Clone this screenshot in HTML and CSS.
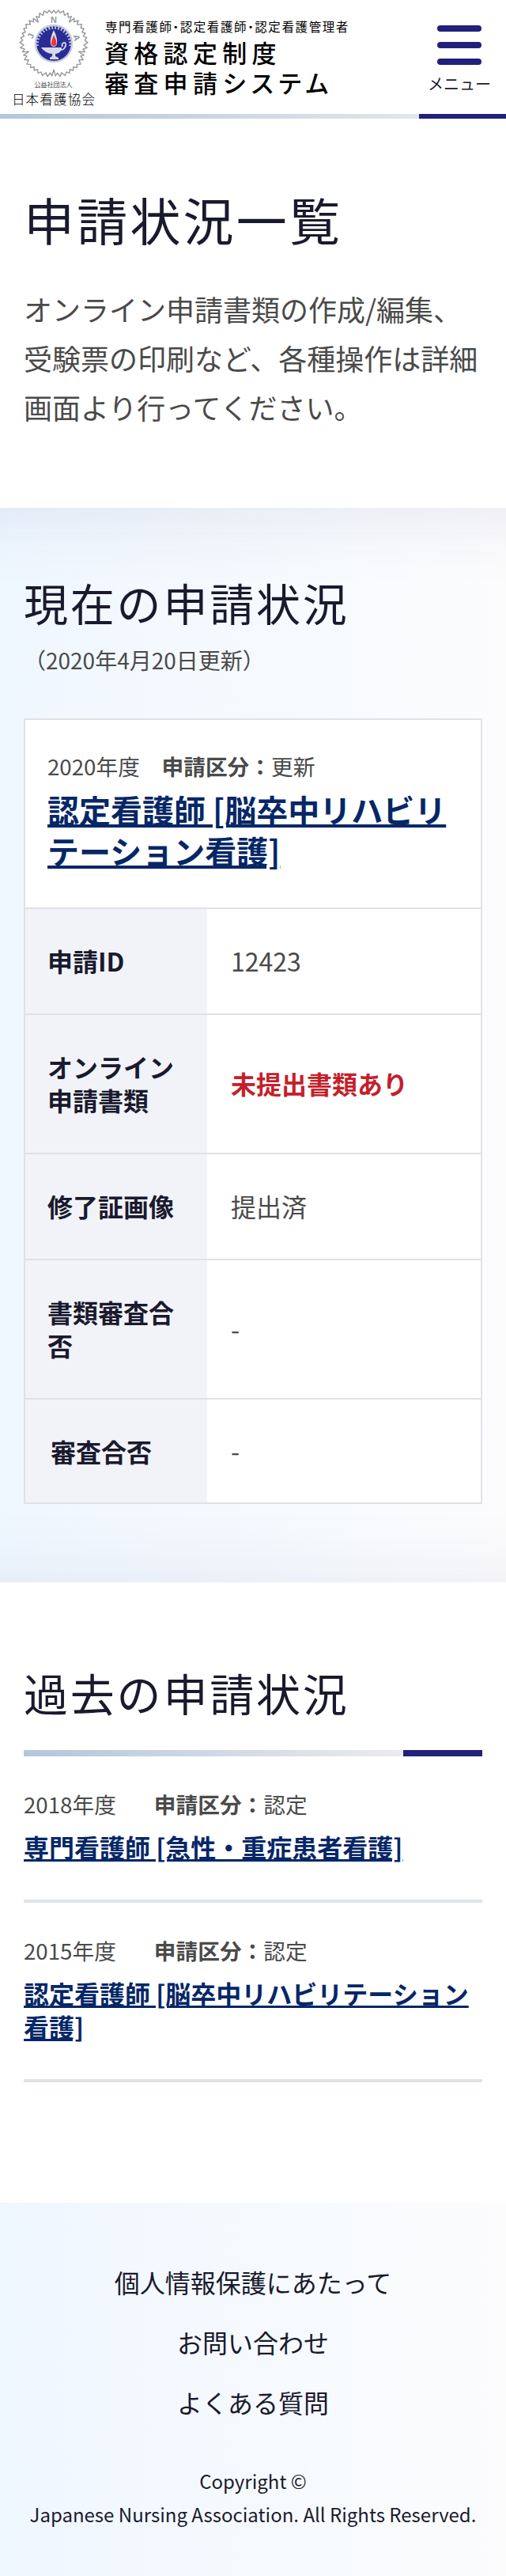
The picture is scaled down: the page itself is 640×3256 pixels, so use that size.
FILE: index.html
```html
<!DOCTYPE html>
<html lang="ja">
<head>
    <meta charset="UTF-8">
    <meta name="viewport" content="width=device-width, initial-scale=1.0">
    <title>申請状況一覧 | 資格認定制度 審査申請システム</title>
    <link rel="stylesheet" href="styles.css">
</head>
<body>
<header class="header">
    <a class="logo" href="#">
        <div class="logo-mark">
            <svg class="emblem" width="88" height="86" viewBox="-44 -43 88 86">
                <defs>
                    <path id="petal" d="M-19.4-26.7L-22.3-34.4L-18.2-32.8L-18-38.5L-13.6-35.5L-12.2-41.2L-8.2-38.6L-5.8-42L-2.7-38.4L0-42L2.7-38.4L5.8-42L8.2-38.6L12.2-41.2L13.6-35.5L18-38.5L18.2-32.8L22.3-34.4L19.4-26.7"/>
                </defs>
                <g fill="none" stroke="#96989b" stroke-width="1.4" stroke-linejoin="round">
                    <use href="#petal"/>
                    <use href="#petal" transform="rotate(72)"/>
                    <use href="#petal" transform="rotate(144)"/>
                    <use href="#petal" transform="rotate(216)"/>
                    <use href="#petal" transform="rotate(288)"/>
                </g>
                <g class="emblem-text">
                    <text x="0" y="-26">N</text>
                    <text x="0" y="-27" transform="rotate(-72)">J</text>
                    <text x="0" y="-26" transform="rotate(76)">A</text>
                </g>
                <circle cx="0" cy="0" r="23" fill="#2a2c96" stroke="#c6cbdc" stroke-width="2.4"/>
                <path d="M-20.9 3A21 21 0 1 1 20.9 3" fill="none" stroke="#c6cbdc" stroke-width="3.6" stroke-dasharray="1.8 2.2"/>
                <path d="M0-17C-5-7-6 4 0 4S5-7 0-17Z" fill="#dfe2ee"/>
                <path d="M0-11C-3-3-5 3 0 3S4-3 0-11Z" fill="#ee3533"/>
                <path d="M-16 5H10C10 11 5 13 2 13V16L6 18V20H-5V18L-2 16V13C-8 13-13 9-16 5Z" fill="#d5d9e8"/>
                <path d="M8 8C13 9 16 3 15 0S9 0 11 4" fill="none" stroke="#d5d9e8" stroke-width="1.8"/>
            </svg>
            <span class="logo-type">公益社団法人</span>
            <span class="logo-org">日本看護協会</span>
        </div>
        <div class="logo-title">
            <span class="logo-lead">専門看護師<i>・</i>認定看護師<i>・</i>認定看護管理者</span>
            <span class="logo-name">資格認定制度</span>
            <span class="logo-name">審査申請<span class="kana">システム</span></span>
        </div>
    </a>
    <a class="menu" href="#">
        <span class="menu-bar"></span>
        <span class="menu-bar"></span>
        <span class="menu-bar"></span>
        <span class="menu-label">メニュー</span>
    </a>
</header>

<main>
    <section class="intro">
        <h1>申請状況一覧</h1>
        <p>オンライン申請書類の作成/編集、受験票の印刷など、各種操作は詳細画面より行ってください。</p>
    </section>

    <section class="current">
        <h2>現在の申請状況</h2>
        <p class="updated">（2020年4月20日更新）</p>
        <div class="card">
            <div class="card-head">
                <p class="meta">2020年度　<strong>申請区分：</strong>更新</p>
                <a class="card-title" href="#">認定看護師 [脳卒中リハビリテーション看護]</a>
            </div>
            <dl class="row">
                <dt>申請ID</dt>
                <dd>12423</dd>
            </dl>
            <dl class="row">
                <dt>オンライン申請書類</dt>
                <dd class="alert">未提出書類あり</dd>
            </dl>
            <dl class="row">
                <dt>修了証画像</dt>
                <dd>提出済</dd>
            </dl>
            <dl class="row">
                <dt>書類審査合否</dt>
                <dd>-</dd>
            </dl>
            <dl class="row last">
                <dt>審査合否</dt>
                <dd>-</dd>
            </dl>
        </div>
    </section>

    <section class="past">
        <h2>過去の申請状況</h2>
        <ul class="past-list">
            <li>
                <p class="meta"><span class="year">2018年度</span><strong>申請区分：</strong>認定</p>
                <a href="#">専門看護師 [急性・重症患者看護]</a>
            </li>
            <li>
                <p class="meta"><span class="year">2015年度</span><strong>申請区分：</strong>認定</p>
                <a href="#">認定看護師 [脳卒中リハビリテーション看護]</a>
            </li>
        </ul>
    </section>
</main>

<footer class="footer">
    <ul class="footer-nav">
        <li><a href="#">個人情報保護にあたって</a></li>
        <li><a href="#">お問い合わせ</a></li>
        <li><a href="#">よくある質問</a></li>
    </ul>
    <p class="copyright">Copyright ©<br>Japanese Nursing Association. All Rights Reserved.</p>
</footer>
</body>
</html>
```
FILE: styles.css
```css
* {
    box-sizing: border-box;
    margin: 0;
    padding: 0;
}

body {
    font-family: "Noto Sans CJK JP", sans-serif;
    color: #4a4a4a;
    background-color: #fff;
}

ul {
    list-style: none;
}

a {
    color: inherit;
    text-decoration: none;
}

/* header */
.header {
    display: flex;
    justify-content: space-between;
    height: 150px;
    background: linear-gradient(90deg, #b3c6db, #e3e6ea 530px, #21217b 530px) bottom / 100% 6px no-repeat;
}

.logo {
    display: flex;
    color: #000;
}

.logo-mark {
    width: 120px;
    padding: 12px 0 0 15px;
    display: flex;
    flex-direction: column;
    align-items: center;
    white-space: nowrap;
}

.emblem {
    display: block;
    flex: none;
    margin-bottom: 3px;
}

.emblem-text {
    font-family: "Liberation Sans", sans-serif;
    font-size: 11px;
    font-weight: bold;
    text-anchor: middle;
    fill: #96989b;
}

.logo-type {
    font-size: 8px;
    line-height: 12px;
    color: #444;
}

.logo-org {
    font-size: 16.5px;
    font-weight: 300;
    line-height: 24px;
    letter-spacing: 1.2px;
    margin-right: -1px;
}

.logo-title {
    padding: 22px 0 0 12px;
    display: flex;
    flex-direction: column;
    font-weight: 500;
    white-space: nowrap;
}

.logo-lead {
    font-size: 15.5px;
    font-weight: 400;
    line-height: 23px;
    letter-spacing: 1.6px;
    margin: 0 0 2px 1px;
}

.logo-lead i {
    font-style: normal;
    margin: 0 -4px;
}

.logo-name {
    font-size: 31px;
    line-height: 38px;
    letter-spacing: 6.3px;
}

.kana {
    letter-spacing: 4px;
}

.menu {
    width: 118px;
    padding-top: 32px;
    display: flex;
    flex-direction: column;
    align-items: center;
    gap: 13px;
}

.menu-bar {
    width: 56px;
    height: 8px;
    border-radius: 4px;
    background-color: #21217b;
}

.menu-label {
    font-size: 20px;
    line-height: 28px;
    margin-top: -3px;
    color: #1a1a2e;
}

/* headings */
h1,
h2 {
    color: #1a1a2e;
    font-weight: 400;
    letter-spacing: 0.05em;
}

h1 {
    font-size: 64px;
    line-height: 84px;
}

h2 {
    font-size: 56px;
    line-height: 74px;
}

.meta {
    font-size: 27.7px;
    line-height: 42px;
}

/* intro */
.intro {
    height: 492px;
    padding: 84px 30px 0;
}

.intro p {
    margin-top: 41px;
    font-size: 36px;
    line-height: 62.2px;
}

/* current application */
.current {
    height: 1358px;
    padding: 82px 30px 0;
    background: linear-gradient(90deg, #eff7ff, #fcfcfd);
    box-shadow: inset 0 100px 90px -90px rgba(60, 60, 120, 0.1), inset 0 -100px 90px -90px rgba(60, 60, 120, 0.08);
}

.updated {
    font-size: 28px;
    line-height: 42px;
    margin: 15px 0 53px;
}

.card {
    border: 2px solid #dfe2e5;
    background-color: #fff;
}

.card-head {
    padding: 37px 28px 46px;
}

.card-title {
    display: block;
    margin-top: 8px;
    font-size: 40px;
    line-height: 52px;
}

.card-title,
.past-list a {
    color: #062767;
    font-weight: bold;
    text-decoration: underline;
}

.row {
    display: flex;
    border-top: 2px solid #dfe2e5;
    font-size: 32px;
    line-height: 42px;
}

.row dt {
    width: 230px;
    padding: 44px 28px 46px;
    background-color: #f2f3f8;
    color: #1a1a2e;
    font-weight: bold;
}

.row dd {
    flex: 1;
    display: flex;
    align-items: center;
    padding: 0 30px 2px;
}

.row .alert {
    color: #c4202a;
    font-weight: bold;
}

.row.last dt {
    padding-bottom: 44px;
    padding-left: 32px;
}

/* past applications */
.past {
    height: 784px;
    padding: 102px 30px 0;
}

.past h2 {
    padding-bottom: 44px;
    background: linear-gradient(90deg, #b3c6db, #ebebee 480px, #21217b 480px) bottom / 100% 8px no-repeat;
}

.past-list li {
    padding: 39px 0 46px;
    border-bottom: 4px solid #dfe3e5;
}

.past-list a {
    display: block;
    margin-top: 12px;
    font-size: 32px;
    line-height: 42px;
}

.year {
    margin-right: 48px;
}

/* footer */
.footer {
    height: 472px;
    padding-top: 62px;
    background: linear-gradient(90deg, #eff7ff, #fcfcfd);
    color: #1a1a2e;
    text-align: center;
}

.footer-nav li {
    font-size: 32px;
    line-height: 76px;
}

.copyright {
    margin-top: 41px;
    font-size: 24px;
    line-height: 42px;
}
```
